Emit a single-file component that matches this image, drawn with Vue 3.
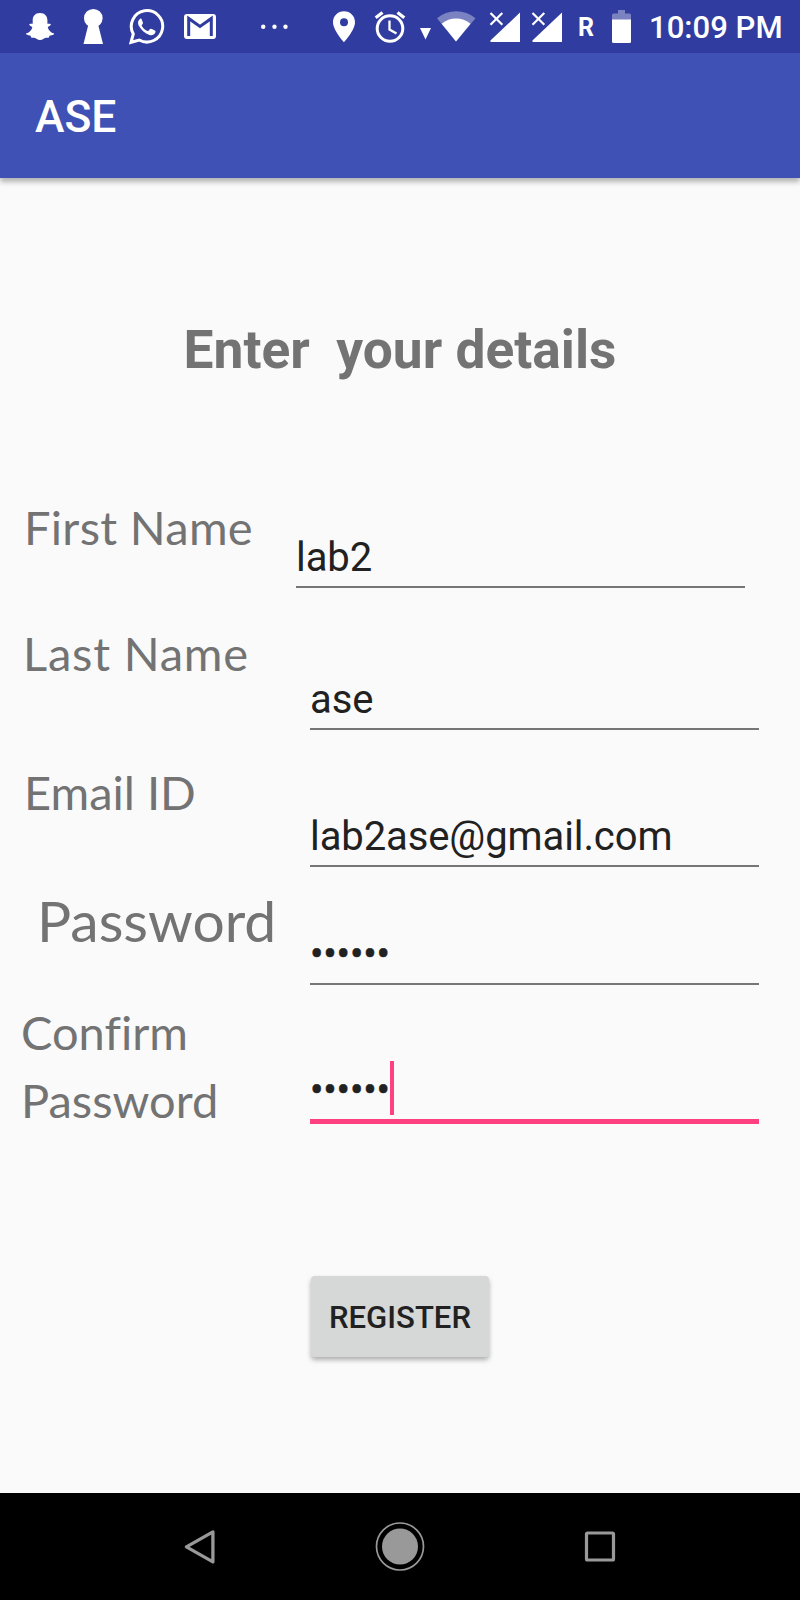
<script setup>
const rows = [
  { id: 'first', label: 'First Name', value: 'lab2' },
  { id: 'last', label: 'Last Name', value: 'ase' },
  { id: 'email', label: 'Email ID', value: 'lab2ase@gmail.com' },
  { id: 'password', label: 'Password', value: '••••••', secret: true },
  { id: 'confirm', label: 'Confirm Password', value: '••••••', secret: true, focused: true }
]
</script>

<template>
  <div class="screen">
    <header class="status">
      <svg class="snap" width="30" height="53" viewBox="25 0 30 53" fill="#fff">
        <path d="M40 13c-5 0-7.3 3.3-7.3 7.300v3.400c-1 .5-2.300-.4-3.300.5-.6 1.500 2.700 2 2.900 3.200-.7 3-3.200 5.200-6.300 6.100.2 2 3 1.600 4.500 2.200.5.700.3 1.900 1.400 2.100 1.500 0 3-.3 4.500 1 2.300 1.600 5 1.600 7.300 0 1.500-1.300 3-1 4.500-1 1.100-.2.900-1.400 1.400-2.100 1.500-.6 4.300-.2 4.500-2.200-3.100-.9-5.600-3.100-6.300-6.100.2-1.200 3.500-1.700 2.900-3.200-1-.9-2.300 0-3.300-.5v-3.400c0-4-2.400-7.300-7.400-7.300z" />
      </svg>
      <svg class="keyhole" width="20" height="53" viewBox="83 0 20 53" fill="#fff">
        <circle cx="93.300" cy="18.200" r="9.300" /><path d="M89 22h8.500L103 44H83.500z" />
      </svg>
      <svg class="chat" width="36" height="53" viewBox="129 0 36 53">
        <path d="M131 42.300l2.300-8.300a15.700 15.700 0 1 1 6 6z" fill="none" stroke="#fff" stroke-width="3" />
        <path d="M140.500 18.500c-2.500 1.500-3.200 4.500-1.500 7.500 2.500 4.300 5.800 7.300 10.500 9 2.800 1 5.500-.3 6-3.200.2-1-.5-1.400-4.500-3-1.500 0-2 2.500-3.300 2.200-2.600-1-4.600-2.800-6-5.300-.2-.900 1.300-1.700 1.300-3l-1.500-3.700c-.3-.5-.5-.6-1-.5z" fill="#fff" />
      </svg>
      <svg class="mail" width="32" height="53" viewBox="184 0 32 53">
        <rect x="184" y="14" width="32" height="25" rx="3" fill="#fff" />
        <path d="M188.700 36V18.500L200 26.500l11.300-8V36" fill="none" stroke="#303c9f" stroke-width="3" />
      </svg>
      <svg class="more" width="28" height="53" viewBox="261 0 28 53" fill="#fff">
        <circle cx="263.200" cy="26.700" r="2.200" /><circle cx="274.500" cy="26.700" r="2.200" /><circle cx="285.500" cy="26.700" r="2.200" />
      </svg>
      <svg class="pin" width="22" height="53" viewBox="333 0 22 53">
        <path fill="#fff" fill-rule="evenodd" d="M344 11.300c-6.200 0-11 4.800-11 10.900 0 8 11 20 11 20s11-12 11-20c0-6.100-4.800-10.900-11-10.900zm0 7a4 4 0 1 1 0 8 4 4 0 0 1 0-8z" />
      </svg>
      <svg class="alarm" width="32" height="53" viewBox="374 0 32 53" fill="none" stroke="#fff">
        <circle cx="390" cy="28.500" r="12.800" stroke-width="3" />
        <path d="M375.700 17.800l6.800-5.300M404.300 17.800l-6.800-5.300" stroke-width="3.300" />
        <path d="M389.500 20.500v9l7 4" stroke-width="2.300" />
      </svg>
      <svg class="caret" width="11" height="53" viewBox="420 0 11 53" fill="#fff"><path d="M420 28h11l-5.500 11.500z" /></svg>
      <svg class="wifi" width="39" height="53" viewBox="437 0 39 53" fill="#fff">
        <path d="M437 18.200a30 30 0 0 1 38.500 0L456 41.500z" opacity=".36" />
        <path d="M441.700 23.800a22.500 22.500 0 0 1 28.800 0L456 41.500z" />
      </svg>
      <svg v-for="n in 2" :key="n" class="signal" width="31" height="53" viewBox="489 0 31 53">
        <path d="M520 12.500V42h-28.500q-2-.2-.8-1.700z" fill="#fff" />
        <path d="M490 12.500l12.500 12.500M502.500 12.500L490 25" stroke="#303c9f" stroke-width="5" />
        <path d="M490.500 13l11.800 11.800M502.300 13l-11.800 11.800" stroke="#fff" stroke-width="2.200" />
      </svg>
      <span class="roaming">R</span>
      <svg class="battery" width="19" height="53" viewBox="612 0 19 53" fill="#fff">
        <path d="M618 10h7v3.500h4.500q1.500 0 1.500 1.500v5h-19v-5q0-1.500 1.500-1.500h4.500z" opacity=".36" />
        <path d="M612 19.500h19V41.500q0 1.500-1.500 1.500h-16q-1.500 0-1.500-1.500z" />
      </svg>
      <span class="clock">10:09 PM</span>
    </header>
    <div class="appbar">ASE</div>
    <main>
      <h1>Enter&nbsp; your details</h1>
      <div v-for="r in rows" :key="r.id" class="row" :class="r.id">
        <label><span>{{ r.label }}</span></label>
        <div class="field" :class="{ focused: r.focused, secret: r.secret }"><span>{{ r.value }}</span><i v-if="r.focused" class="cursor"></i></div>
      </div>
      <button>REGISTER</button>
    </main>
    <nav>
      <svg width="36" height="40" viewBox="0 0 36 40"><path d="M31.500 5v30L5 20z" transform="translate(-.6 -.1)" fill="none" stroke="#999" stroke-width="3.300" stroke-linejoin="round" /></svg>
      <svg width="50" height="50" viewBox="0 0 50 50"><circle cx="25" cy="24.500" r="23.500" fill="none" stroke="#999" stroke-width="1.700" /><circle cx="25" cy="24.500" r="18" fill="#999" /></svg>
      <svg width="32" height="32" viewBox="0 0 32 32"><rect x="2.500" y="2" width="27" height="27" rx="1" fill="none" stroke="#999" stroke-width="3.200" /></svg>
    </nav>
  </div>
</template>

<style>
body { margin: 0; background: #fafafa; }
</style>

<style scoped>
.screen { width: 800px; height: 1600px; display: flex; flex-direction: column; overflow: hidden; background: #fafafa; font-family: Roboto, sans-serif; }
.status { height: 53px; flex: none; display: flex; background: #303c9f; color: #fff; white-space: nowrap; }
.status svg { flex: none; display: block; }
.snap { margin-left: 25px; }
.keyhole { margin-left: 28px; }
.chat { margin-left: 26px; }
.mail { margin-left: 19px; }
.more { margin-left: 45px; }
.pin { margin-left: 44px; }
.alarm { margin-left: 19px; }
.caret { margin-left: 14px; }
.wifi { margin-left: 6px; }
.signal { margin-left: 13px; }
.signal + .signal { margin-left: 11px; }
.roaming { width: 34px; margin-left: 16px; font-size: 25px; font-weight: 700; line-height: 55px; }
.battery { margin-left: 0; }
.clock { margin-left: 18px; font-size: 31.100px; font-weight: 500; line-height: 55px; }
.appbar { height: 125px; flex: none; box-sizing: border-box; padding-left: 35px; background: #3f51b5; color: #fff; font-size: 44.400px; font-weight: 500; line-height: 129px; box-shadow: 0 4px 5px rgba(0, 0, 0, .28); }
main { height: 1315px; flex: none; }
h1 { height: 64px; margin: 140px 0 98px; font-size: 53.300px; line-height: 64px; text-align: center; color: #737373; }
.row { display: flex; align-items: flex-start; }
label { width: 284px; flex: none; box-sizing: border-box; color: #737373; font-family: "Coming Soon", Lato, sans-serif; font-size: 47px; line-height: 60px; white-space: nowrap; font-variant-ligatures: none; }
.field { width: 449px; box-sizing: border-box; height: 56px; border-bottom: 2px solid #767676; font-size: 40px; line-height: 52px; letter-spacing: -.1px; color: #212121; display: flex; white-space: nowrap; }
.first { height: 120px; }
.first label { width: 296px; padding: 17px 0 0 24px; letter-spacing: .3px; }
.first .field { margin-top: 52px; }
.last { height: 140px; }
.last label { width: 310px; padding: 23px 0 0 23px; letter-spacing: .8px; }
.last .field { margin-top: 74px; }
.email { height: 140px; }
.email label { width: 310px; padding: 22px 0 0 24px; }
.email .field { margin-top: 71px; }
.password { height: 115px; }
.password label { width: 310px; padding: 5px 0 0 37px; font-size: 57px; line-height: 70px; }
.password .field { margin-top: 49px; }
.confirm { height: 135px; }
.confirm label { width: 310px; padding: 3px 70px 0 21px; line-height: 68px; white-space: normal; }
.confirm .field { height: 63px; margin-top: 66px; line-height: 60px; }
.field.secret { letter-spacing: -.2px; -webkit-text-stroke: .5px #212121; }
.field.focused { border-bottom: 5px solid #ff4081; }
.cursor { width: 4px; height: 54px; }
.focused .cursor { background: #ff4081; }
button { display: block; width: 178px; height: 81px; margin: 146px 0 0 311px; padding: 0; border: 0; border-radius: 4px; background: #d6d7d7; color: #212121; font-family: Roboto, sans-serif; font-size: 31.100px; font-weight: 500; line-height: 83px; box-shadow: 0 3px 5px rgba(0, 0, 0, .3); }
nav { height: 107px; flex: none; display: grid; grid-template-columns: 200px 200px 200px; justify-content: center; place-items: center; background: #000; }
</style>
